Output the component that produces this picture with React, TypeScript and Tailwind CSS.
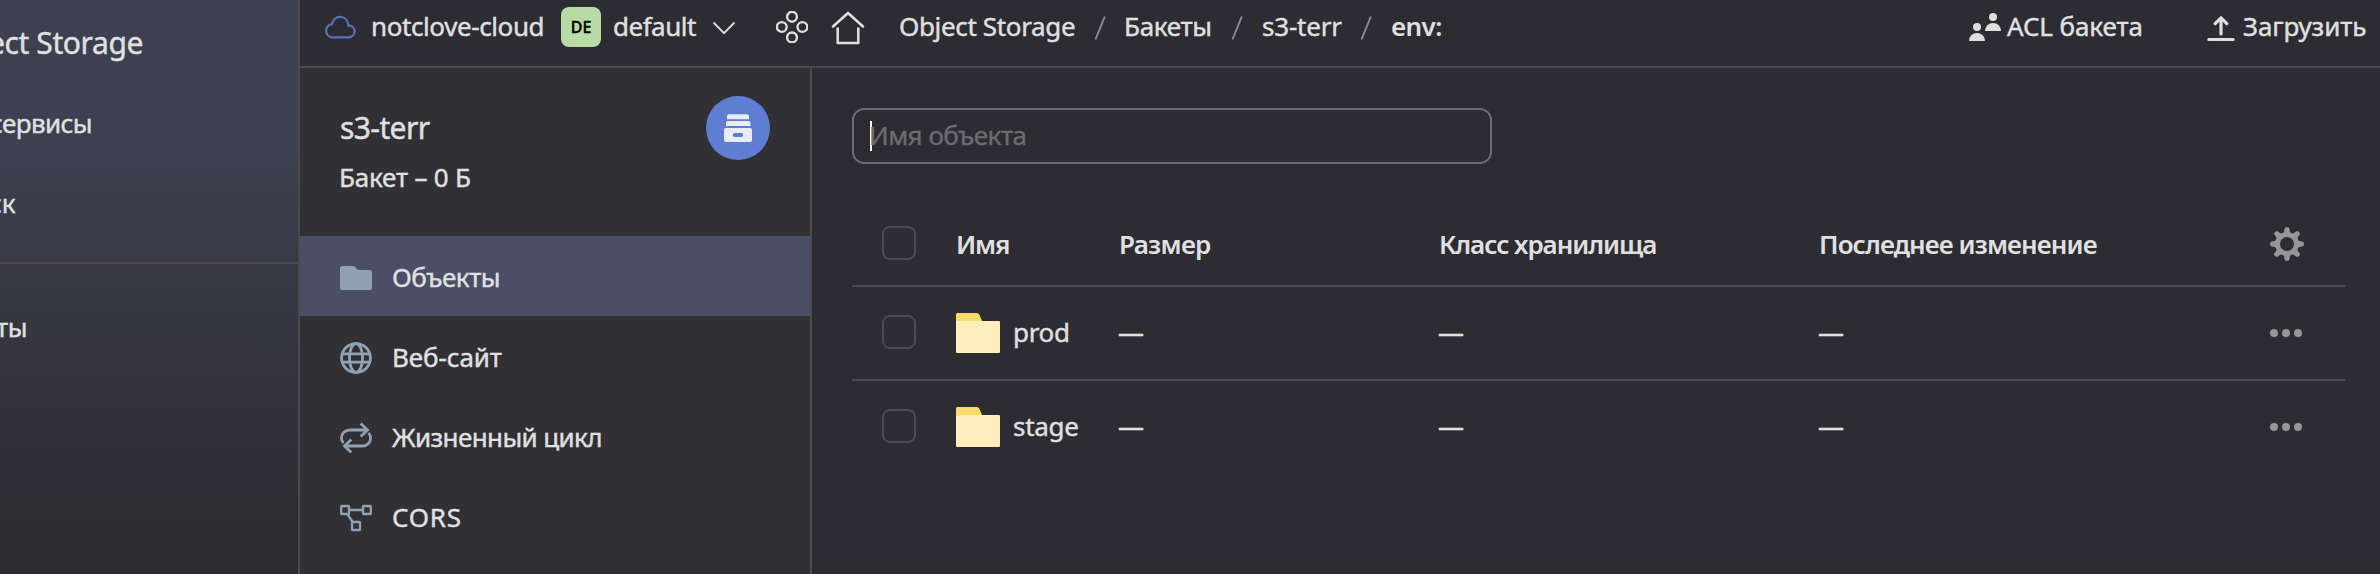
import type { ReactNode } from 'react';

function CloudIcon() {
  return (
    <svg className="mt-[2px] h-8 w-8 shrink-0" viewBox="0 0 32 32" fill="none" stroke="#5873b8" strokeWidth="2.2" strokeLinejoin="round">
      <path d="M8 26.300h16.800a5.900 5.900 0 0 0 1-11.700c-.5-.1-1.100-.1-1.600 0 .1-.6.1-1.200 0-1.700a8.100 8.100 0 0 0-15.600-1.700c-.3.600-.5 1.200-.6 1.900A6.650 6.650 0 0 0 8 26.300z" />
    </svg>
  );
}

function ChevronIcon() {
  return (
    <svg className="mt-[4px] h-[14px] w-[24px] shrink-0" viewBox="0 0 24 14" fill="none" stroke="#dededf" strokeWidth="1.8" strokeLinecap="round">
      <path d="M2 2l10 10.200L22 2" />
    </svg>
  );
}

function ClusterIcon() {
  return (
    <svg className="mt-[2px] h-8 w-8 shrink-0" viewBox="0 0 32 32" fill="none" stroke="#dededf" strokeWidth="2.4">
      <circle cx="16" cy="5.800" r="4.900" />
      <circle cx="5.800" cy="16" r="4.900" />
      <circle cx="26.400" cy="16" r="4.900" />
      <circle cx="16" cy="26.400" r="4.900" />
    </svg>
  );
}

function HomeIcon() {
  return (
    <svg className="mt-[3px] h-[34px] w-[34px] shrink-0" viewBox="0 0 34 34" fill="none" stroke="#dededf" strokeWidth="2.6" strokeLinecap="round" strokeLinejoin="round">
      <path d="M2 15.500L17 2 32 15.500" />
      <path d="M6.700 17.500v14.500h20.600V17.500" />
    </svg>
  );
}

function PeopleIcon() {
  return (
    <svg className="mt-[2px] h-7 w-8 shrink-0" viewBox="0 0 32 28" fill="#dededf">
      <circle cx="24" cy="4" r="4" />
      <circle cx="8" cy="14" r="4" />
      <path d="M16 18a8 8 0 0 1 16 0z" />
      <path d="M0 28a8 8 0 0 1 16 0z" />
    </svg>
  );
}

function UploadIcon() {
  return (
    <svg className="mt-[5px] h-[26px] w-7 shrink-0" viewBox="0 0 28 26" fill="none" stroke="#dededf" strokeWidth="3.2" strokeLinecap="round" strokeLinejoin="round">
      <path d="M14 18V2M8.200 7.600L14 1.800l5.800 5.800M1.800 23.500h24.400" />
    </svg>
  );
}

function BucketIcon() {
  return (
    <svg className="h-7 w-7" viewBox="0 0 28 28">
      <g fill="#e8ecf9">
        <path d="M3 5.200V2.200a2 2 0 0 1 2-2h18a2 2 0 0 1 2 2v3z" />
        <path d="M2 12V9a2 2 0 0 1 2-2h20.500a2 2 0 0 1 2 2v3z" />
        <rect x="0" y="14" width="28" height="14" rx="2" />
      </g>
      <rect x="9" y="19" width="10" height="4" rx="1.400" fill="#5f7dd1" />
    </svg>
  );
}

function FolderSolidIcon() {
  return (
    <svg className="h-8 w-8" viewBox="0 0 32 32" fill="#91a1b2">
      <path d="M2.600 4h10.500c.8 0 1.300.3 1.800.8l2.900 3.200H29.500A2.500 2.500 0 0 1 32 10.500v15a2.500 2.500 0 0 1-2.500 2.500h-27A2.500 2.500 0 0 1 0 25.500v-19A2.500 2.500 0 0 1 2.600 4z" />
    </svg>
  );
}

function GlobeIcon() {
  return (
    <svg className="h-8 w-8" viewBox="0 0 32 32" fill="none" stroke="#91a1b2" strokeWidth="2.800">
      <circle cx="16" cy="16" r="14.400" />
      <ellipse cx="16" cy="16" rx="6.600" ry="14.400" />
      <path d="M2.500 11.800h27M2.500 20.200h27" />
    </svg>
  );
}

function CycleIcon() {
  return (
    <svg className="h-8 w-8" viewBox="0 0 32 32" fill="none" stroke="#91a1b2" strokeWidth="2.800">
      <path d="M3.600 21C2.200 19.700 1.400 18 1.400 16c0-4.400 3.600-8 8.500-8H27" />
      <path d="M20.700 1.500L27.500 8l-6.800 6.500" />
      <path d="M28.400 11c1.400 1.300 2.200 3 2.200 5 0 4.400-3.600 8-8.500 8H5" />
      <path d="M11.300 17.500L4.500 24l6.800 6.500" />
    </svg>
  );
}

function NodesIcon() {
  return (
    <svg className="h-8 w-8" viewBox="0 0 32 32" fill="none" stroke="#91a1b2" strokeWidth="2.300">
      <rect x="1.200" y="4" width="7.800" height="8" rx=".6" />
      <rect x="23" y="4" width="7.800" height="8" rx=".6" />
      <rect x="12" y="20" width="8" height="8" rx=".6" />
      <path d="M9 8h14M7.300 12l5.700 8.500" />
    </svg>
  );
}

function GearIcon() {
  const teeth = [0, 45, 90, 135, 180, 225, 270, 315];
  return (
    <svg className="ml-px h-[34px] w-[34px]" viewBox="-17 -17 34 34" fill="#969598">
      <circle r="9.400" fill="none" stroke="#969598" strokeWidth="4.800" />
      {teeth.map((a) => (
        <path key={a} transform={`rotate(${a})`} d="M-4.400-10.500C-3-11.500-2.700-12.500-2.500-15.200Q-2.300-17 0-17T2.500-15.200C2.700-12.500 3-11.500 4.400-10.500z" />
      ))}
    </svg>
  );
}

function DotsIcon() {
  return (
    <svg className="ml-[1px] h-8 w-8" viewBox="0 0 32 32" fill="#969598">
      <circle cx="4" cy="16" r="4" />
      <circle cx="16" cy="16" r="4" />
      <circle cx="28" cy="16" r="4" />
    </svg>
  );
}

function ObjectFolderIcon() {
  return (
    <svg className="h-10 w-11" viewBox="0 0 44 40">
      <path d="M0 9V1.500A1.500 1.500 0 0 1 1.500 0H20.500c1.600 0 2.500.8 3 2l3 7z" fill="#fbdb68" />
      <path d="M0 8h43a1 1 0 0 1 1 1v30a1 1 0 0 1-1 1H1a1 1 0 0 1-1-1z" fill="#fdefbd" />
    </svg>
  );
}

const Slash = () => (
  <svg className="mt-[3px] h-6 w-3" viewBox="0 0 12 24" stroke="#8b8a8e" strokeWidth="2">
    <path d="M10.800 .5L1.500 23.500" />
  </svg>
);

const Checkbox = () => <span className="block h-[34px] w-[34px] rounded-lg border-2 border-[#4b4a4f]" />;

const menu: { icon: ReactNode; label: string; track: string; active?: boolean }[] = [
  { icon: <FolderSolidIcon />, label: 'Объекты', track: 'tracking-[-0.45px]', active: true },
  { icon: <GlobeIcon />, label: 'Веб-сайт', track: 'tracking-[-0.1px]' },
  { icon: <CycleIcon />, label: 'Жизненный цикл', track: 'tracking-[-0.6px]' },
  { icon: <NodesIcon />, label: 'CORS', track: 'tracking-[0.8px]' },
];

const GRID = 'grid grid-cols-[104px_163px_320px_380px_450px_75px] items-center';

export default function App() {
  return (
    <div className="flex h-[574px] w-[2380px] overflow-hidden bg-[#2d2c33] font-['Noto_Sans','Open_Sans',sans-serif] text-[26px] leading-9 text-[#e0e0e1] [-webkit-text-stroke:0.4px]">
      <aside className="w-[300px] shrink-0 overflow-hidden border-r-2 border-[#4b4a4f] bg-linear-to-b from-[#3d4050] from-25% via-[#333239] via-70% to-[#2d2c31] to-95% whitespace-nowrap">
        <div className="flex h-[262px] flex-col items-start pt-[22px]">
          <p className="-ml-[12px] text-[30px] leading-[42px] tracking-[-0.4px]">ect Storage</p>
          <p className="mt-[41px] -ml-[10px] tracking-[-0.6px]">сервисы</p>
          <p className="mt-11 -ml-[11px]">ск</p>
        </div>
        <div className="h-0.5 bg-[#4b4a4f]" />
        <p className="mt-[45px] -ml-[4px] tracking-[-0.3px]">ты</p>
      </aside>

      <div className="flex min-w-0 flex-1 flex-col">
        <header className="flex h-[68px] shrink-0 items-center border-b-2 border-[#4b4a4f] pb-[14px] pl-6 whitespace-nowrap">
          <CloudIcon />
          <span className="ml-[15px] w-[190px] tracking-[-0.4px]">notclove-cloud</span>
          <span className="mt-[2px] flex h-10 w-10 items-center justify-center rounded-lg bg-[#b8dba8] text-[16px] font-medium leading-10 text-black">DE</span>
          <span className="ml-[12px] w-[99px] tracking-[-0.5px]">default</span>
          <ChevronIcon />
          <span className="w-10" />
          <ClusterIcon />
          <span className="w-[23px]" />
          <HomeIcon />
          <nav className="ml-[34px] flex items-center">
            <span className="w-[195px] tracking-[-0.35px]">Object Storage</span>
            <Slash />
            <span className="ml-[18px] w-[107px] tracking-[-0.3px]">Бакеты</span>
            <Slash />
            <span className="ml-[19px] w-[98px] tracking-[-0.2px]">s3-terr</span>
            <Slash />
            <span className="ml-[19px] font-semibold tracking-[-0.6px] [-webkit-text-stroke:0]">env:</span>
          </nav>
          <div className="ml-auto flex items-center">
            <PeopleIcon />
            <span className="ml-[6px] w-[200px] tracking-[-0.1px]">ACL бакета</span>
            <UploadIcon />
            <span className="ml-[8px] w-[137px] tracking-[-0.1px]">Загрузить</span>
          </div>
        </header>

        <div className="flex min-h-0 flex-1">
          <section className="w-[512px] shrink-0 border-r-2 border-[#4b4a4f] bg-[#313035]">
            <div className="flex h-[168px] items-start justify-between pr-10 pl-10">
              <div>
                <h2 className="mt-[39px] text-[30px] leading-[42px] tracking-[-0.6px]">s3-terr</h2>
                <p className="mt-[10px] ml-[-1px] tracking-[-0.2px]">Бакет – 0 Б</p>
              </div>
              <span className="mt-7 flex h-16 w-16 items-center justify-center rounded-full bg-[#5f7dd1]">
                <BucketIcon />
              </span>
            </div>
            {menu.map(({ icon, label, track, active }) => (
              <div key={label} className={`flex h-20 items-center pl-10 ${active ? 'bg-[#4a4e66]' : ''}`}>
                <span className="mt-[4px]">{icon}</span>
                <span className={`mt-[2px] ml-[20px] ${track}`}>{label}</span>
              </div>
            ))}
          </section>

          <main className="flex-1 pt-10 pl-10">
            <div className="flex h-14 w-[640px] items-center rounded-xl border-2 border-[#6c6b6f] pl-4">
              <span className="h-[30px] w-0.5 bg-white" />
              <span className="-mt-[2px] -ml-[3px] tracking-[-0.5px] text-[#6c6b6f]">Имя объекта</span>
            </div>

            <div className="mt-[39px] w-[1493px]">
              <div className={`${GRID} h-[84px] border-b-2 border-[#4b4a4f] font-semibold [-webkit-text-stroke:0]`}>
                <span className="-mt-[2px] pl-[30px]"><Checkbox /></span>
                <span className="tracking-[-1.2px]">Имя</span>
                <span className="tracking-[-0.7px]">Размер</span>
                <span className="tracking-[-1.05px]">Класс хранилища</span>
                <span className="tracking-[-0.9px]">Последнее изменение</span>
                <GearIcon />
              </div>
              {['prod', 'stage'].map((name, i) => (
                <div key={name} className={`${GRID} ${i === 0 ? 'h-[94px] border-b-2 border-[#4b4a4f]' : 'h-[92px]'}`}>
                  <span className="-mt-[2px] pl-[30px]"><Checkbox /></span>
                  <span className="flex items-center gap-[13px]">
                    <ObjectFolderIcon />
                    <span className="-mt-[2px] tracking-[-0.3px]">{name}</span>
                  </span>
                  <span className="-mt-[3px] -ml-px">—</span>
                  <span className="-mt-[3px] -ml-px">—</span>
                  <span className="-mt-[3px] -ml-px">—</span>
                  <DotsIcon />
                </div>
              ))}
            </div>
          </main>
        </div>
      </div>
    </div>
  );
}
